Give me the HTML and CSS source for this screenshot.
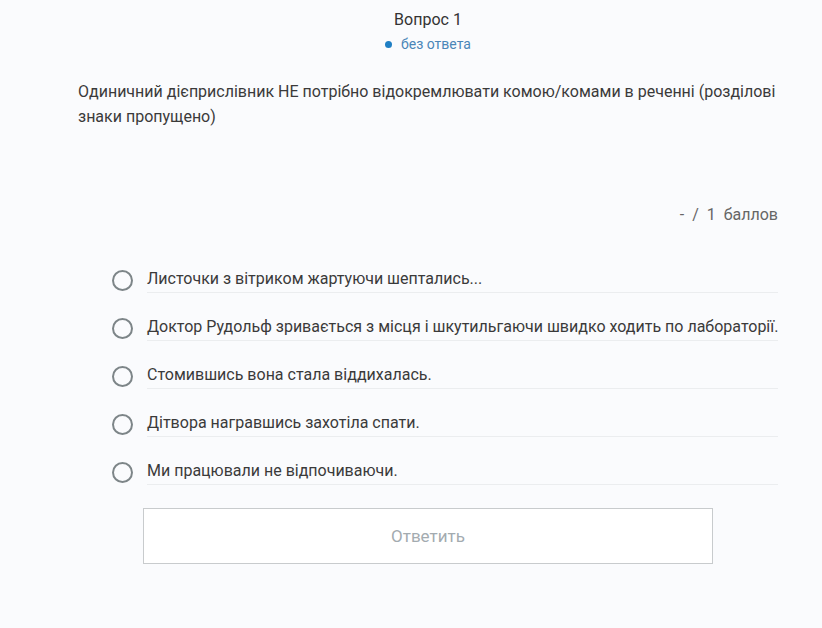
FILE: index.html
```html
<html lang="uk">
<head>
    <meta charset="UTF-8">
    <meta name="viewport" content="width=device-width, initial-scale=1.0">
    <title>Вопрос 1</title>
    <link rel="stylesheet" href="styles.css">
</head>
<body>
    <div class="quiz">
        <div class="header">
            <div class="title">Вопрос 1</div>
            <div class="status"><span class="dot"></span>без ответа</div>
        </div>
        <div class="question">Одиничний дієприслівник НЕ потрібно відокремлювати комою/комами в реченні (розділові знаки пропущено)</div>
        <div class="score">-&nbsp; /&nbsp; 1&nbsp; баллов</div>
        <div class="options">
            <label class="option"><span class="radio"></span><span class="text">Листочки з вітриком жартуючи шептались...</span></label>
            <label class="option"><span class="radio"></span><span class="text">Доктор Рудольф зривається з місця і шкутильгаючи швидко ходить по лабораторії.</span></label>
            <label class="option"><span class="radio"></span><span class="text">Стомившись вона стала віддихалась.</span></label>
            <label class="option"><span class="radio"></span><span class="text">Дітвора награвшись захотіла спати.</span></label>
            <label class="option"><span class="radio"></span><span class="text">Ми працювали не відпочиваючи.</span></label>
        </div>
        <button type="button" class="submit">Ответить</button>
    </div>
</body>
</html>
```

FILE: styles.css
```css
body { margin: 0; background-color: #fafbfd; font-family: Roboto, "Liberation Sans", sans-serif; color: #3a3a3a; }
.quiz { width: 700px; margin-left: 78px; padding-top: 10px; }
.header { text-align: center; }
.title { font-size: 16px; line-height: 20px; color: #333; }
.status { margin-top: 4px; font-size: 14px; line-height: 20px; color: #4a86b8; }
.dot { display: inline-block; width: 7px; height: 7px; border-radius: 50%; background-color: #1f7fc4; margin-right: 9px; vertical-align: 1px; }
.question { margin-top: 25px; font-size: 16px; line-height: 25px; color: #3a3a3a; }
.score { margin-top: 76px; text-align: right; font-size: 16px; line-height: 20px; color: #666; }
.options { display: flex; flex-direction: column; gap: 24px; margin-top: 44px; padding-left: 34px; }
.option { display: flex; align-items: center; cursor: pointer; }
.radio { flex: none; width: 17px; height: 17px; border: 2px solid #7d8588; border-radius: 50%; margin-right: 14px; margin-top: -2px; }
.text { flex: 1; font-size: 16px; line-height: 20px; padding-bottom: 3px; border-bottom: 1px solid #ebedef; white-space: nowrap; }
.submit { display: block; width: 570px; height: 56px; margin: 23px 0 0 65px; background-color: #fff; border: 1px solid #c8cbcd; color: #a3abb0; font-family: Roboto, "Liberation Sans", sans-serif; font-size: 17px; cursor: pointer; }
```
